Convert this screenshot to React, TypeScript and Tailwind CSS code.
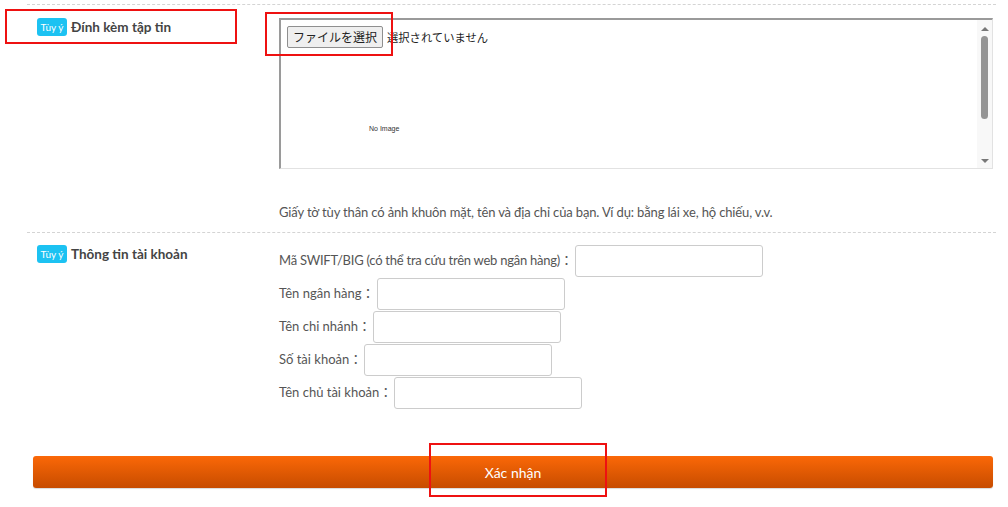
const font = { fontFamily: '"Lato", "Noto Sans CJK JP", sans-serif' };

const Badge = () => (
  <span className="inline-flex items-center justify-center w-[30px] h-[18px] rounded-[3px] bg-[#1cc2f2] text-white text-[10px] leading-none">
    Tùy ý
  </span>
);

const FieldRow = ({ label, tight }: { label: string; tight?: boolean }) => (
  <div className="flex items-center h-[32px] mb-px">
    <span className={tight ? 'text-[13px] text-[#555] tracking-[-0.25px]' : 'text-[13px] text-[#555]'}>{label}：</span>
    <div className="w-[188px] h-[32px] ml-[2px] border border-[#ccc] rounded-[3px] bg-white" />
  </div>
);

const App = () => {
  return (
    <div className="relative w-[1008px] h-[507px] bg-white overflow-hidden" style={font}>
      <div className="pl-[27px] pr-[12px] pt-[4px]">
        {/* file attachment */}
        <div className="flex border-t border-dashed border-[#d4d4d4] pt-[13px] pb-[10px]">
          <div className="w-[252px] pl-[10px] flex items-center h-[18px]">
            <Badge />
            <span className="ml-[4px] text-[13.5px] font-bold text-[#444]">Đính kèm tập tin</span>
          </div>
          <div className="flex-1 pr-[3px]">
            <div className="relative h-[151px] border-t-2 border-l-2 border-r border-b border-t-[#9a9a9a] border-l-[#9a9a9a] border-r-[#e2e2e2] border-b-[#e2e2e2] bg-white flex">
              <div className="flex-1 pl-[6px] pt-[6px]">
                <div className="flex items-center" style={{ fontFamily: '"Noto Sans CJK JP", sans-serif' }}>
                  <span className="h-[22px] px-[5px] flex items-center border border-[#8f8f8f] rounded-[2px] bg-[#efefef] text-[12px] text-[#222]">
                    ファイルを選択
                  </span>
                  <span className="ml-[4px] text-[11.3px] text-[#222]">選択されていません</span>
                </div>
                <div className="mt-[76px] ml-[82px] text-[7px] text-[#333]" style={{ fontFamily: '"Liberation Sans", sans-serif' }}>
                  No Image
                </div>
              </div>
              <div className="w-[15px] bg-[#f8f8f8] flex flex-col items-center">
                <div className="mt-[7px] w-0 h-0 border-l-[4px] border-r-[4px] border-b-[4px] border-l-transparent border-r-transparent border-b-[#777]" />
                <div className="mt-[5px] w-[7px] h-[83px] rounded-[4px] bg-[#959595]" />
                <div className="mt-auto mb-[5px] w-0 h-0 border-l-[4px] border-r-[4px] border-t-[4px] border-l-transparent border-r-transparent border-t-[#777]" />
              </div>
            </div>
            <p className="mt-[33px] text-[13px] leading-[20px] text-[#555] tracking-[-0.14px]">
              Giấy tờ tùy thân có ảnh khuôn mặt, tên và địa chỉ của bạn. Ví dụ: bằng lái xe, hộ chiếu, v.v.
            </p>
          </div>
        </div>

        {/* account info */}
        <div className="flex border-t border-dashed border-[#d4d4d4] pt-[12px]">
          <div className="w-[252px] pl-[10px] flex items-center h-[18px]">
            <Badge />
            <span className="ml-[4px] text-[13.5px] font-bold text-[#444]">Thông tin tài khoản</span>
          </div>
          <div className="flex-1">
            <FieldRow label="Mã SWIFT/BIG (có thể tra cứu trên web ngân hàng)" tight />
            <FieldRow label="Tên ngân hàng" />
            <FieldRow label="Tên chi nhánh" />
            <FieldRow label="Số tài khoản" />
            <FieldRow label="Tên chủ tài khoản" />
          </div>
        </div>
      </div>

      <div className="pl-[33px] pr-[15px] mt-[46px]">
        <button className="w-full h-[32px] rounded-[3px] bg-gradient-to-b from-[#fb6808] to-[#c74c00] text-white text-[14px] shadow-[0_1px_1px_rgba(0,0,0,0.15)]">
          Xác nhận
        </button>
      </div>

      {/* annotation boxes */}
      <div className="absolute left-[5px] top-[9px] w-[232px] h-[35px] border-2 border-[#ee1111]" />
      <div className="absolute left-[265px] top-[12px] w-[128px] h-[44px] border-2 border-[#ee1111]" />
      <div className="absolute left-[429px] top-[443px] w-[178px] h-[54px] border-2 border-[#ee1111]" />
    </div>
  );
};

export default App;
